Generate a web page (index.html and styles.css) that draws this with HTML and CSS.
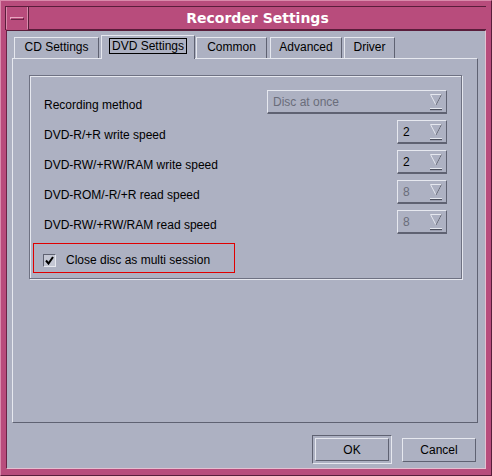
FILE: index.html
```html
<!DOCTYPE html>
<html lang="en">
<head>
    <meta charset="UTF-8">
    <title>Recorder Settings</title>
    <link rel="stylesheet" href="styles.css">
</head>
<body>
    <div class="frame">
        <div class="titlebar">
            <div class="menu-btn"><span></span></div>
            <div class="title">Recorder Settings</div>
        </div>
        <div class="client">
            <div class="tabs">
                <div class="tab tab-cd">CD Settings</div>
                <div class="tab tab-dvd active"><span class="focus">DVD Settings</span></div>
                <div class="tab tab-common">Common</div>
                <div class="tab tab-adv">Advanced</div>
                <div class="tab tab-driver">Driver</div>
            </div>
            <div class="panel">
                <div class="group">
                    <div class="row">
                        <label>Recording method</label>
                        <div class="combo wide disabled"><span>Disc at once</span><svg class="arrow" width="14" height="18" viewBox="0 0 14 18"><path d="M1.5 1.5 H12.5 L7 12 Z" fill="none" stroke="#e6e8ef" stroke-width="1"/><path d="M12.5 1.5 L7 12" stroke="#5f6272" stroke-width="1"/><rect x="1" y="15" width="12" height="1" fill="#e6e8ef"/><rect x="1" y="16" width="12" height="1.2" fill="#4b4e5c"/></svg></div>
                    </div>
                    <div class="row">
                        <label>DVD-R/+R write speed</label>
                        <div class="combo"><span>2</span><svg class="arrow" width="14" height="18" viewBox="0 0 14 18"><path d="M1.5 1.5 H12.5 L7 12 Z" fill="none" stroke="#e6e8ef" stroke-width="1"/><path d="M12.5 1.5 L7 12" stroke="#5f6272" stroke-width="1"/><rect x="1" y="15" width="12" height="1" fill="#e6e8ef"/><rect x="1" y="16" width="12" height="1.2" fill="#4b4e5c"/></svg></div>
                    </div>
                    <div class="row">
                        <label>DVD-RW/+RW/RAM write speed</label>
                        <div class="combo"><span>2</span><svg class="arrow" width="14" height="18" viewBox="0 0 14 18"><path d="M1.5 1.5 H12.5 L7 12 Z" fill="none" stroke="#e6e8ef" stroke-width="1"/><path d="M12.5 1.5 L7 12" stroke="#5f6272" stroke-width="1"/><rect x="1" y="15" width="12" height="1" fill="#e6e8ef"/><rect x="1" y="16" width="12" height="1.2" fill="#4b4e5c"/></svg></div>
                    </div>
                    <div class="row">
                        <label>DVD-ROM/-R/+R read speed</label>
                        <div class="combo disabled"><span>8</span><svg class="arrow" width="14" height="18" viewBox="0 0 14 18"><path d="M1.5 1.5 H12.5 L7 12 Z" fill="none" stroke="#e6e8ef" stroke-width="1"/><path d="M12.5 1.5 L7 12" stroke="#5f6272" stroke-width="1"/><rect x="1" y="15" width="12" height="1" fill="#e6e8ef"/><rect x="1" y="16" width="12" height="1.2" fill="#4b4e5c"/></svg></div>
                    </div>
                    <div class="row">
                        <label>DVD-RW/+RW/RAM read speed</label>
                        <div class="combo disabled"><span>8</span><svg class="arrow" width="14" height="18" viewBox="0 0 14 18"><path d="M1.5 1.5 H12.5 L7 12 Z" fill="none" stroke="#e6e8ef" stroke-width="1"/><path d="M12.5 1.5 L7 12" stroke="#5f6272" stroke-width="1"/><rect x="1" y="15" width="12" height="1" fill="#e6e8ef"/><rect x="1" y="16" width="12" height="1.2" fill="#4b4e5c"/></svg></div>
                    </div>
                    <div class="check-row">
                        <span class="checkbox"><svg width="9" height="9" viewBox="0 0 9 9"><path d="M1 4.5 L3.5 7.5 L8 1" fill="none" stroke="#000" stroke-width="2"/></svg></span>
                        <span class="check-label">Close disc as multi session</span>
                    </div>
                </div>
            </div>
            <div class="buttons">
                <div class="btn-default"><button class="btn ok">OK</button></div>
                <button class="btn cancel">Cancel</button>
            </div>
        </div>
    </div>
</body>
</html>
```

FILE: styles.css
```css
body { margin: 0; font-family: "Liberation Sans", Arial, sans-serif; font-size: 12px; color: #000; }
.frame { width: 492px; height: 476px; box-sizing: border-box; background: #b84c7c; padding: 6px 5px 6px 5px; border-top: 1px solid #d98aab; border-left: 1px solid #d98aab; border-right: 1px solid #5a1d3b; border-bottom: 1px solid #5a1d3b; display: flex; flex-direction: column; }
.titlebar { height: 23px; display: flex; border-top: 1px solid #5a1d3b; border-left: 1px solid #5a1d3b; margin: -1px 0 0 -1px; }
.menu-btn { width: 22px; height: 22px; box-sizing: border-box; border-right: 1px solid #d98aab; border-left: 1px solid #d98aab; display: flex; align-items: center; justify-content: center; }
.menu-btn span { width: 14px; height: 3px; box-sizing: border-box; border: 1px solid #6b2346; border-top-color: #e8a6c0; border-left-color: #e8a6c0; }
.title { flex: 1; text-align: center; color: #fff; font-family: "DejaVu Sans", sans-serif; font-weight: bold; font-size: 14px; line-height: 22px; border-left: 1px solid #5a1d3b; border-bottom: 1px solid #5a1d3b; }
.client { flex: 1; background: #adb1c2; border-top: 1px solid #5a1d3b; border-left: 1px solid #6b2346; border-right: 1px solid #e4c0d0; border-bottom: 1px solid #e4c0d0; display: flex; flex-direction: column; padding: 0 0 0 5px; }

.tabs { display: flex; height: 22px; margin-top: 5px; padding-left: 2px; align-items: flex-end; position: relative; z-index: 1; }
.tab { box-sizing: border-box; height: 21px; border-top: 1px solid #e6e8ef; border-left: 1px solid #e6e8ef; border-right: 1px solid #5f6272; text-align: center; line-height: 19px; margin-right: 2px; }
.tab-cd { width: 85px; }
.tab-dvd { width: 94px; margin-right: 1px; }
.tab-common { width: 71px; }
.tab-adv { width: 72px; margin-left: 1px; }
.tab-driver { width: 51px; }
.tab.active { height: 24px; margin-bottom: -1px; background: #adb1c2; line-height: 21px; }
.focus { border: 1px solid #000; padding: 0 2px; }

.panel { width: 466px; height: 365px; box-sizing: border-box; border-top: 1px solid #e6e8ef; border-left: 1px solid #e6e8ef; border-right: 1px solid #5f6272; border-bottom: 1px solid #5f6272; padding: 16px 0 0 16px; }
.group { width: 433px; height: 204px; box-sizing: border-box; border: 1px solid #6e7182; box-shadow: inset 1px 1px 0 #e6e8ef, 1px 1px 0 #e6e8ef; padding: 14px 14px 0 14px; display: flex; flex-direction: column; gap: 6px; }
.row { height: 24px; display: flex; align-items: center; justify-content: space-between; }
.row label { margin-top: 5px; }
.combo { width: 50px; height: 24px; box-sizing: border-box; border-top: 1px solid #e6e8ef; border-left: 1px solid #e6e8ef; border-right: 1px solid #5f6272; border-bottom: 2px solid #5f6272; display: flex; align-items: center; justify-content: space-between; padding: 0 3px 0 5px; }
.combo.wide { width: 180px; }
.combo.disabled span { color: #6a6d7a; }
.arrow { display: block; }

.check-row { margin: 3px 0 0 -11px; width: 202px; height: 30px; box-sizing: border-box; border: 1px solid #e00000; display: flex; align-items: center; padding: 4px 0 0 9px; }
.checkbox { width: 13px; height: 13px; box-sizing: border-box; border-top: 1px solid #5f6272; border-left: 1px solid #5f6272; border-right: 1px solid #e6e8ef; border-bottom: 1px solid #e6e8ef; background: #c4c7d4; display: flex; align-items: center; justify-content: center; }
.check-label { margin-left: 10px; }

.buttons { display: flex; justify-content: flex-end; align-items: center; margin-top: 12px; padding-right: 9px; gap: 10px; }
.btn-default { width: 80px; height: 29px; box-sizing: border-box; border-top: 1px solid #5f6272; border-left: 1px solid #5f6272; border-right: 1px solid #e6e8ef; border-bottom: 1px solid #e6e8ef; padding: 2px; }
.btn { font-family: "Liberation Sans", Arial, sans-serif; font-size: 12px; color: #000; background: #adb1c2; box-sizing: border-box; border-top: 1px solid #e6e8ef; border-left: 1px solid #e6e8ef; border-right: 1px solid #5f6272; border-bottom: 1px solid #5f6272; padding: 0; }
.ok { width: 74px; height: 23px; }
.cancel { width: 74px; height: 24px; }
```
